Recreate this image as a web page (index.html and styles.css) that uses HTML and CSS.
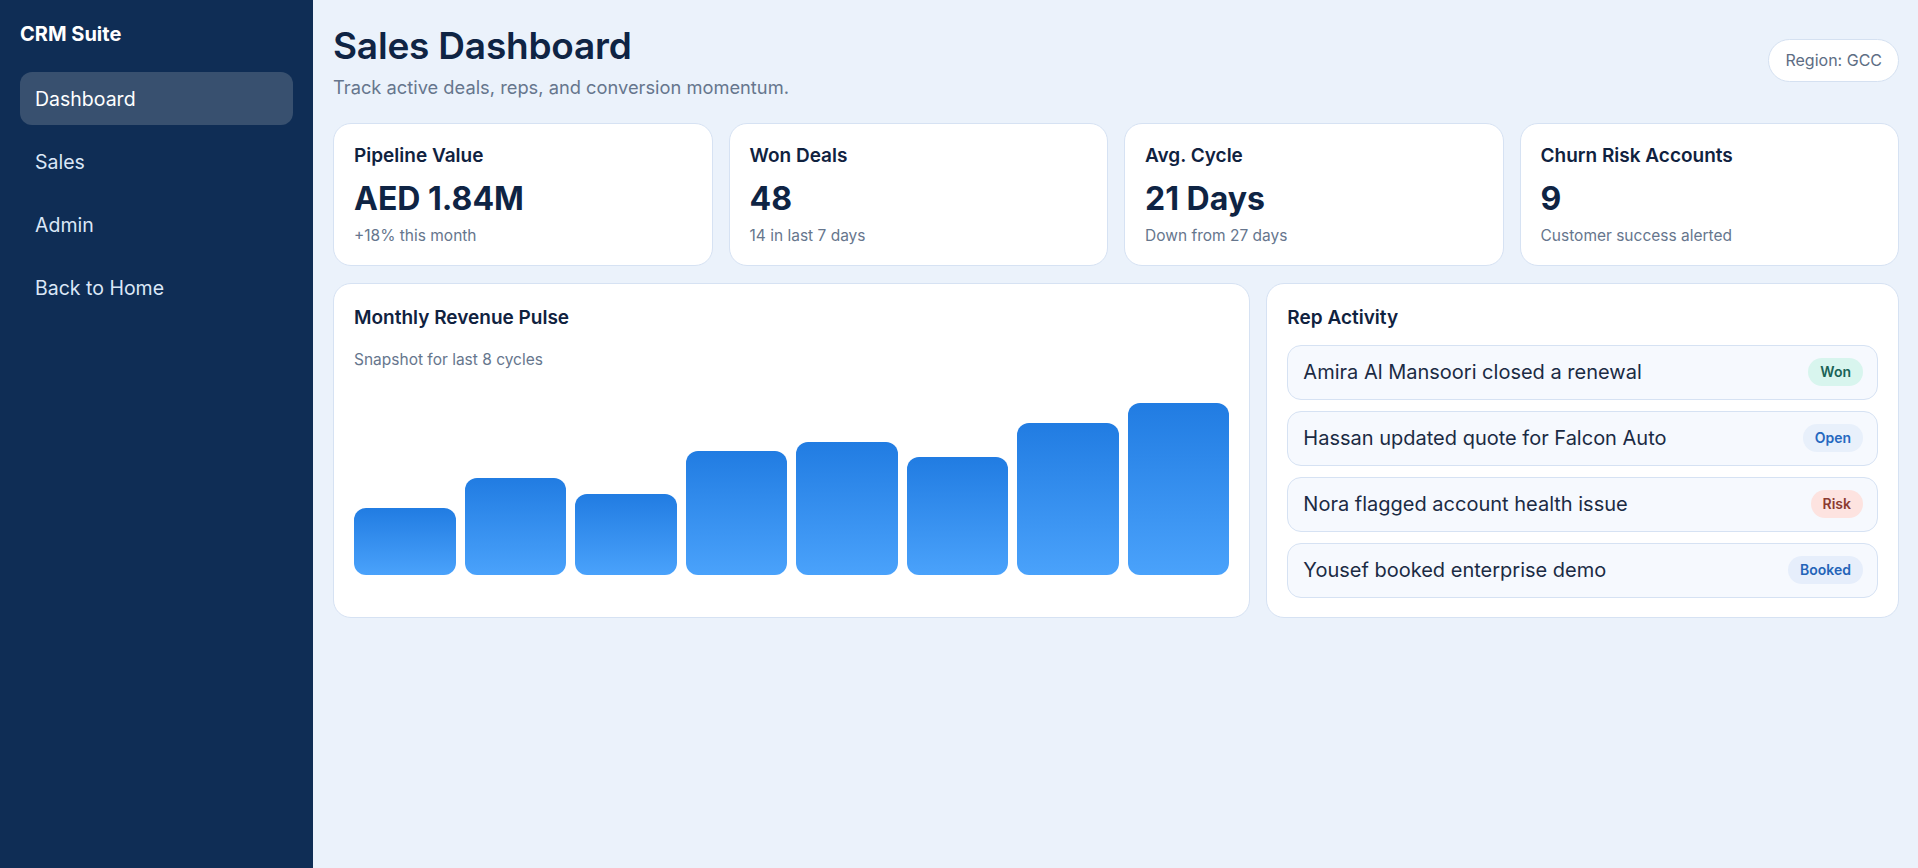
FILE: index.html
```html
<!DOCTYPE html>
<html lang="en">
<head>
  <meta charset="UTF-8">
  <meta name="viewport" content="width=device-width, initial-scale=1.0">
  <title>Sales Dashboard</title>
  <link rel="stylesheet" href="styles.css">
</head>
<body>
  <aside class="sidebar">
    <div class="brand">CRM Suite</div>
    <nav class="nav">
      <a href="#" class="nav-item active">Dashboard</a>
      <a href="#" class="nav-item">Sales</a>
      <a href="#" class="nav-item">Admin</a>
      <a href="#" class="nav-item">Back to Home</a>
    </nav>
  </aside>

  <main class="main">
    <header class="page-header">
      <div>
        <h1>Sales Dashboard</h1>
        <p class="subtitle">Track active deals, reps, and conversion momentum.</p>
      </div>
      <span class="region-pill">Region: GCC</span>
    </header>

    <section class="stats">
      <div class="card stat">
        <div class="stat-label">Pipeline Value</div>
        <div class="stat-value">AED 1.84M</div>
        <div class="stat-note">+18% this month</div>
      </div>
      <div class="card stat">
        <div class="stat-label">Won Deals</div>
        <div class="stat-value">48</div>
        <div class="stat-note">14 in last 7 days</div>
      </div>
      <div class="card stat">
        <div class="stat-label">Avg. Cycle</div>
        <div class="stat-value">21 Days</div>
        <div class="stat-note">Down from 27 days</div>
      </div>
      <div class="card stat">
        <div class="stat-label">Churn Risk Accounts</div>
        <div class="stat-value">9</div>
        <div class="stat-note">Customer success alerted</div>
      </div>
    </section>

    <section class="panels">
      <div class="card panel chart-panel">
        <h2>Monthly Revenue Pulse</h2>
        <p class="panel-note">Snapshot for last 8 cycles</p>
        <div class="chart">
          <div class="bar" style="height: 67px"></div>
          <div class="bar" style="height: 97px"></div>
          <div class="bar" style="height: 81px"></div>
          <div class="bar" style="height: 124px"></div>
          <div class="bar" style="height: 133px"></div>
          <div class="bar" style="height: 118px"></div>
          <div class="bar" style="height: 152px"></div>
          <div class="bar" style="height: 172px"></div>
        </div>
      </div>

      <div class="card panel">
        <h2>Rep Activity</h2>
        <ul class="activity">
          <li class="activity-item">
            <span>Amira Al Mansoori closed a renewal</span>
            <span class="badge won">Won</span>
          </li>
          <li class="activity-item">
            <span>Hassan updated quote for Falcon Auto</span>
            <span class="badge open">Open</span>
          </li>
          <li class="activity-item">
            <span>Nora flagged account health issue</span>
            <span class="badge risk">Risk</span>
          </li>
          <li class="activity-item">
            <span>Yousef booked enterprise demo</span>
            <span class="badge booked">Booked</span>
          </li>
        </ul>
      </div>
    </section>
  </main>
</body>
</html>
```

FILE: styles.css
```css
body {
  font-family: Inter, "Noto Sans", Arial, sans-serif;
  margin: 0;
  display: flex;
  min-height: 100vh;
  background-color: #ebf2fb;
  color: #10223f;
}

/* Sidebar */
.sidebar {
  width: 313px;
  flex-shrink: 0;
  background-color: #0f2d55;
  padding: 20px 20px;
  box-sizing: border-box;
}

.brand {
  color: #ffffff;
  font-size: 20px;
  font-weight: 700;
  line-height: 1.2;
  padding-top: 2px;
  margin-bottom: 26px;
}

.nav {
  display: flex;
  flex-direction: column;
  gap: 10px;
}

.nav-item {
  display: flex;
  align-items: center;
  height: 53px;
  padding: 0 15px;
  border-radius: 12px;
  color: #dbe7f7;
  font-size: 19.5px;
  text-decoration: none;
}

.nav-item.active {
  background-color: #38506f;
  color: #ffffff;
}

/* Main area */
.main {
  flex: 1;
  padding: 24px 19px 20px 20px;
  min-width: 0;
}

.page-header {
  display: flex;
  justify-content: space-between;
  align-items: flex-start;
}

h1 {
  margin: 0;
  font-size: 37px;
  font-weight: 600;
  line-height: 1.2;
  color: #0f2444;
  letter-spacing: -0.2px;
}

.subtitle {
  margin: 9px 0 0;
  font-size: 18.3px;
  line-height: 1.2;
  color: #66768d;
}

.region-pill {
  margin-top: 15px;
  padding: 11px 16px;
  border: 1px solid #d5e1f1;
  border-radius: 999px;
  background-color: #ffffff;
  color: #5d6d84;
  font-size: 16px;
  line-height: 19px;
}

.card {
  background-color: #ffffff;
  border: 1px solid #d6e2f3;
  border-radius: 18px;
}

/* Stat cards */
.stats {
  display: grid;
  grid-template-columns: repeat(4, 1fr);
  gap: 16px;
  margin-top: 24px;
}

.stat {
  padding: 21px 20px 20px;
}

.stat-label {
  font-size: 19px;
  font-weight: 600;
  line-height: 1.2;
}

.stat-value {
  margin-top: 12px;
  font-size: 32px;
  font-weight: 700;
  line-height: 1.2;
  color: #0f2444;
}

.stat-note {
  margin-top: 8px;
  font-size: 15.5px;
  line-height: 1.2;
  color: #66768d;
}

/* Lower panels */
.panels {
  display: grid;
  grid-template-columns: 1.45fr 1fr;
  gap: 16px;
  margin-top: 17px;
}

.panel {
  padding: 23px 20px 19px;
  display: flex;
  flex-direction: column;
}

h2 {
  margin: 0;
  font-size: 19px;
  font-weight: 600;
  line-height: 1.2;
}

.panel-note {
  margin: 21px 0 0;
  font-size: 15.5px;
  line-height: 1.2;
  color: #66768d;
}

.chart {
  flex: 1;
  display: flex;
  align-items: flex-end;
  gap: 9px;
  margin-bottom: 23px;
}

.bar {
  flex: 1;
  border-radius: 12px;
  background: linear-gradient(180deg, #217ce2 0%, #4aa2fb 100%);
}

.activity {
  list-style: none;
  margin: 15px 0 0;
  padding: 0;
  display: flex;
  flex-direction: column;
  gap: 11px;
}

.activity-item {
  display: flex;
  align-items: center;
  justify-content: space-between;
  height: 55px;
  box-sizing: border-box;
  padding: 0 14px 0 15px;
  background-color: #f6f9fe;
  border: 1px solid #d6e2f3;
  border-radius: 14px;
  font-size: 20px;
  color: #1b2b44;
}

.badge {
  padding: 5px 12px;
  border-radius: 999px;
  font-size: 14px;
  font-weight: 600;
  line-height: 18px;
}

.badge.won {
  background-color: #d8f5ee;
  color: #1a6356;
}

.badge.open {
  background-color: #e8f0fb;
  color: #2668c0;
}

.badge.risk {
  background-color: #fde3e0;
  color: #8b3b31;
}

.badge.booked {
  background-color: #e6eefb;
  color: #2464b8;
}
```
